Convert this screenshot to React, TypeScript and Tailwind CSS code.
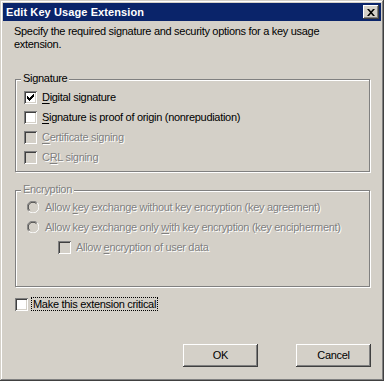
import type { ReactNode } from 'react';

const FONT = { fontFamily: '"Liberation Sans", Arial, sans-serif' };

function Ul({ children }: { children: ReactNode }) {
  return <span className="underline underline-offset-[2px]">{children}</span>;
}

function CheckBox({ checked = false, disabled = false }: { checked?: boolean; disabled?: boolean }) {
  return (
    <div
      className={`relative w-[13px] h-[13px] shrink-0 shadow-[inset_1px_1px_0_#808080,inset_-1px_-1px_0_#ffffff,inset_2px_2px_0_#404040,inset_-2px_-2px_0_#d4d0c8] ${
        disabled ? 'bg-[#d4d0c8]' : 'bg-white'
      }`}
    >
      {checked && (
        <svg className="absolute left-[3px] top-[3px]" width="7" height="7" viewBox="0 0 7 7">
          <path d="M0 2h1v3h-1zM1 3h1v3h-1zM2 4h1v3h-1zM3 3h1v3h-1zM4 2h1v3h-1zM5 1h1v3h-1zM6 0h1v3h-1z" fill="#000" />
        </svg>
      )}
    </div>
  );
}

function Radio() {
  return (
    <svg width="12" height="12" viewBox="0 0 12 12" className="shrink-0">
      <circle cx="6" cy="6" r="5.5" fill="#d4d0c8" />
      <path d="M10.2 1.8A5.5 5.5 0 0 0 1.8 10.2" stroke="#808080" strokeWidth="1" fill="none" />
      <path d="M9.4 2.6A4.4 4.4 0 0 0 2.6 9.4" stroke="#404040" strokeWidth="1" fill="none" />
      <path d="M1.8 10.2A5.5 5.5 0 0 0 10.2 1.8" stroke="#ffffff" strokeWidth="1" fill="none" />
    </svg>
  );
}

function Group({ title, disabled, className, children }: { title: string; disabled?: boolean; className: string; children: ReactNode }) {
  return (
    <div
      className={`relative border border-[#808080] shadow-[1px_1px_0_#ffffff,inset_1px_1px_0_#ffffff] ${className}`}
    >
      <span
        className={`absolute left-[5px] top-[-8px] px-[2px] leading-[13px] bg-[#d4d0c8] ${
          disabled ? 'text-[#808080] [text-shadow:1px_1px_0_#ffffff]' : 'text-black'
        }`}
      >
        {title}
      </span>
      {children}
    </div>
  );
}

const dis = 'text-[#808080] [text-shadow:1px_1px_0_#ffffff]';

export default function App() {
  return (
    <div
      className="w-[384px] h-[381px] bg-[#d4d0c8] p-[3px] flex flex-col text-[11px] leading-[13px] text-black tracking-[-0.3px] shadow-[inset_-1px_-1px_0_#404040,inset_1px_1px_0_#d4d0c8,inset_-2px_-2px_0_#808080,inset_2px_2px_0_#ffffff]"
      style={FONT}
    >
      {/* Title bar */}
      <div className="h-[18px] bg-[#0a246a] flex items-center justify-between pl-[3px] pr-[2px]">
        <span className="text-white font-bold text-[11px] tracking-[0.1px]">Edit Key Usage Extension</span>
        <div className="w-[16px] h-[14px] bg-[#d4d0c8] flex items-center justify-center shadow-[inset_-1px_-1px_0_#404040,inset_1px_1px_0_#ffffff,inset_-2px_-2px_0_#808080]">
          <svg width="8" height="7" viewBox="0 0 8 7">
            <path d="M0 0h2l2 2.2L6 0h2L5 3.5 8 7H6L4 4.8 2 7H0l3-3.5z" fill="#000" />
          </svg>
        </div>
      </div>

      {/* Client area */}
      <div className="flex flex-col pl-[12px] pr-[11px]">
        <p className="mt-[4px] -ml-[1px] max-w-[330px]">
          Specify the required signature and security options for a key usage extension.
        </p>

        <Group title="Signature" className="mt-[28px] h-[93px] pt-[7px] pl-[8px]">
          <div className="flex flex-col">
            <div className="h-[20px] flex items-center gap-[5px]">
              <CheckBox checked />
              <span><Ul>D</Ul>igital signature</span>
            </div>
            <div className="h-[20px] flex items-center gap-[5px]">
              <CheckBox />
              <span><Ul>S</Ul>ignature is proof of origin (nonrepudiation)</span>
            </div>
            <div className="h-[20px] flex items-center gap-[5px]">
              <CheckBox disabled />
              <span className={dis}><Ul>C</Ul>ertificate signing</span>
            </div>
            <div className="h-[20px] flex items-center gap-[5px]">
              <CheckBox disabled />
              <span className={dis}>C<Ul>R</Ul>L signing</span>
            </div>
          </div>
        </Group>

        <Group title="Encryption" disabled className="mt-[18px] h-[97px] pt-[6px]">
          <div className="flex flex-col">
            <div className="h-[20px] flex items-center gap-[6px] pl-[11px]">
              <Radio />
              <span className={dis}>Allow <Ul>k</Ul>ey exchange without key encryption (key agreement)</span>
            </div>
            <div className="h-[20px] flex items-center gap-[6px] pl-[11px]">
              <Radio />
              <span className={dis}>Allow key exchange only <Ul>w</Ul>ith key encryption (key encipherment)</span>
            </div>
            <div className="h-[20px] flex items-center gap-[5px] pl-[42px]">
              <CheckBox disabled />
              <span className={dis}>Allow <Ul>e</Ul>ncryption of user data</span>
            </div>
          </div>
        </Group>

        <div className="mt-[7px] h-[20px] flex items-center gap-[3px]">
          <CheckBox />
          <span className="border border-dotted border-black px-[1px] leading-[12px]">Make this extension critical</span>
        </div>

        <div className="mt-[30px] flex justify-end gap-[38px] -mr-[1px]">
          <button className="w-[75px] h-[23px] bg-[#d4d0c8] shadow-[inset_-1px_-1px_0_#404040,inset_1px_1px_0_#ffffff,inset_-2px_-2px_0_#808080]">
            OK
          </button>
          <button className="w-[75px] h-[23px] bg-[#d4d0c8] shadow-[inset_-1px_-1px_0_#404040,inset_1px_1px_0_#ffffff,inset_-2px_-2px_0_#808080]">
            Cancel
          </button>
        </div>
      </div>
    </div>
  );
}
